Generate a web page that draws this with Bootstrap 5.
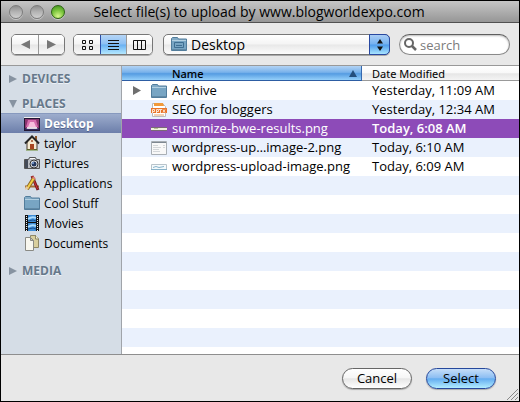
<!DOCTYPE html>
<html lang="en">
<head>
<meta charset="utf-8">
<meta name="viewport" content="width=device-width, initial-scale=1">
<title>Select file(s) to upload</title>
<link rel="stylesheet" href="https://cdn.jsdelivr.net/npm/bootstrap@5.3.0/dist/css/bootstrap.min.css">
<style>
body { font-family: "Open Sans", "Noto Sans", sans-serif; font-size: 13px; line-height: 19px; color: #000; }
.dialog { background: #e8e8e8; border: 1px solid #000; }
.titlebar { height: 22px; background: linear-gradient(#c6c6c6, #969696); border-bottom: 1px solid #515151; padding: 0 66px 0 8px; }
.titlebar h1 { font-size: 14px; line-height: 20px; white-space: nowrap; }
.lights { gap: 7px; }
.light { width: 14px; height: 14px; border-radius: 50%; border: 1px solid #7c7c7c; background: linear-gradient(#8e8e8e, #b4b4b4 50%, #d0d0d0); box-shadow: 0 1px 0 #c8c8c8; }
.light.go { border-color: #2e6414; background: radial-gradient(circle at 50% 85%, #d8f78c, #7cc63e 50%, #3d8d1c); }
.toolbar { height: 42px; padding: 11px 10px 0; }
.seg { border: 1px solid #777; border-radius: 5px; height: 21px; overflow: hidden; box-shadow: 0 1px 0 #aaa; }
.seg .btn { width: 26px; border: 0; border-radius: 0; background: linear-gradient(#fff, #f4f4f4 48%, #e6e6e6 52%, #f8f8f8); }
.seg .btn + .btn { border-left: 1px solid #999; }
.seg .btn.on { background: linear-gradient(#b5d5f6, #8cc0f4 48%, #68b0f2 52%, #b4e8ff); border-color: #2d4fa8; }
.seg svg { display: block; }
.place { margin-left: 10px; margin-right: 9px; height: 21px; }
.place select { appearance: none; height: 21px; border: 1px solid #777; border-radius: 5px; padding: 0 24px 0 27px; font-size: 14px; line-height: 19px; color: #000; background: linear-gradient(#fff, #f4f4f4 48%, #e8e8e8 52%, #fcfcfc); box-shadow: 0 1px 0 #aaa; }
.place .folder { left: 8px; top: 3px; pointer-events: none; }
.place .stepper { right: 0; top: 0; width: 21px; height: 21px; border: 1px solid #2848a0; border-radius: 0 5px 5px 0; background: linear-gradient(#aacdf4, #74b1f0 48%, #4e9bea 52%, #a8e4ff); pointer-events: none; }
.find { width: 111px; height: 21px; margin-right: -1px; }
.find input { height: 21px; border: 1px solid #8a8a8a; border-top-color: #5f5f5f; border-radius: 11px; padding: 0 8px 0 20px; font-size: 13px; line-height: 19px; box-shadow: inset 0 1px 2px #bbb; }
.find input::placeholder { color: #7b7b7b; opacity: 1; }
.find svg { left: 5px; top: 4px; pointer-events: none; }
.browser { border-top: 1px solid #999; border-bottom: 1px solid #8e8e8e; }
.sidebar { width: 121px; background: #d5dde6; border-right: 1px solid #a0a4aa; font-size: 12px; padding-top: 3px; }
.group-toggle { border: 0; background: none; padding: 0 0 0 8px; height: 19px; gap: 5px; color: #66788a; font-weight: 700; font-size: 12px; text-shadow: 0 1px 0 #edf2f7; }
.group-toggle svg { fill: #8793a1; }
.places-group { margin-top: 6px; margin-bottom: 8px; }
.side-item { height: 20px; padding-left: 23px; gap: 4px; color: #000; text-decoration: none; }
.side-item svg { flex: none; }
.side-item.current { color: #fff; font-weight: 700; background: linear-gradient(#9dadcd, #6c7eaa); border-top: 1px solid #8799be; text-shadow: 0 1px 0 #51638d; }
.files { min-width: 0; background: repeating-linear-gradient(#fff 0 19px, #eaf1fd 19px 38px) 0 15px; background-repeat: no-repeat; }
.filelist { table-layout: fixed; border-collapse: separate; border-spacing: 0; }
.filelist th { height: 15px; padding: 0; font-family: "Noto Sans", sans-serif; font-size: 11px; line-height: 13px; font-weight: 400; border-bottom: 1px solid #999; background: linear-gradient(#fff, #f8f8f8 50%, #e6e6e6 55%, #f4f4f4); }
.filelist th.sorted { font-weight: 500; border-bottom-color: #2d5da3; border-right: 1px solid #3668ae; background: linear-gradient(#b2d3f4, #79b2eb 45%, #559ce2 55%, #95d0fa); }
.sort-label { padding-left: 50px; }
.filelist td { height: 19px; padding: 0; white-space: nowrap; }
.filelist .when { padding-left: 10px; }
.filelist .chosen td { background: #8d4bb8; color: #fff; }
.filelist .chosen .when { font-weight: 600; }
.name-cell { height: 19px; padding-left: 11px; gap: 5px; }
.name-cell svg { flex: none; }
.name-cell .turn { width: 13px; }
.actions { height: 46px; padding: 0 23px 0 0; gap: 14px; }
.pill { width: 70px; height: 21px; padding: 0; border: 1px solid #666; border-radius: 11px; font-size: 13px; line-height: 18px; color: #000; background: linear-gradient(#fff, #f6f6f6 45%, #e6e6e6 52%, #fff); box-shadow: 0 1px 1px #aaa; }
.pill.main { border-color: #26489c; background: linear-gradient(#c6def8, #8ebff3 45%, #65adf0 52%, #b2edff); }
.grip { right: 1px; bottom: 1px; }
</style>
</head>
<body>
<svg class="d-none" aria-hidden="true">
  <symbol id="folder" viewBox="0 0 16 14"><path d="M.5 13.5v-12l1-1h5l1 1.500h8v11.500z" fill="#82aac5" stroke="#527d9c"/><path d="M1 4h14v9H1z" fill="#78a5c3"/><path d="M1 3.500h14" stroke="#b3d0e1"/><path d="M1 12.500h14" stroke="#6189a5"/></symbol>
  <symbol id="right" viewBox="0 0 8 8"><path d="M0 0l8 4-8 4z"/></symbol>
  <symbol id="down" viewBox="0 0 8 8"><path d="M0 0h8L4 8z"/></symbol>
</svg>
<div class="dialog d-flex flex-column min-vh-100 position-relative">
  <header class="titlebar d-flex align-items-center">
    <div class="lights d-flex"><span class="light"></span><span class="light"></span><span class="light go"></span></div>
    <h1 class="flex-grow-1 text-center fw-normal m-0">Select file(s) to upload by www.blogworldexpo.com</h1>
  </header>
  <div class="toolbar d-flex">
    <div class="seg d-flex" role="group" aria-label="History">
      <button class="btn p-0 d-flex align-items-center justify-content-center" aria-label="Back"><svg width="9" height="9"><path d="M9 0v9L0 4.500z" fill="#777"/></svg></button>
      <button class="btn p-0 d-flex align-items-center justify-content-center" aria-label="Forward"><svg width="9" height="9"><path d="M0 0v9l9-4.500z" fill="#777"/></svg></button>
    </div>
    <div class="seg d-flex ms-2" role="group" aria-label="View">
      <button class="btn p-0 d-flex align-items-center justify-content-center" aria-label="Icons"><svg width="11" height="10" fill="none" stroke="#111"><path d="M.5.5h3v3h-3zM7.500.5h3v3h-3zM.5 6.500h3v3h-3zM7.500 6.500h3v3h-3z"/></svg></button>
      <button class="btn on p-0 d-flex align-items-center justify-content-center" aria-label="List"><svg width="11" height="10" stroke="#111"><path d="M0 .5h11M0 3.500h11M0 6.500h11M0 9.500h11"/></svg></button>
      <button class="btn p-0 d-flex align-items-center justify-content-center" aria-label="Columns"><svg width="13" height="10" fill="none" stroke="#111"><path d="M.5.5h12v9H.5zM4.500 0v10M8.500 0v10"/></svg></button>
    </div>
    <div class="place position-relative flex-grow-1">
      <select class="w-100 d-block" aria-label="Location"><option>Desktop</option></select>
      <svg class="folder position-absolute" width="16" height="14"><use href="#folder"/><path d="M3.500 5.500h9v5h-9zM5 8.500h6" fill="none" stroke="#3f6e91"/></svg>
      <span class="stepper position-absolute d-flex align-items-center justify-content-center"><svg width="6" height="12"><path d="M0 4.500h6L3 0zM0 7.500h6L3 12z" fill="#111"/></svg></span>
    </div>
    <div class="find position-relative">
      <input class="w-100 d-block" type="search" placeholder="search" aria-label="Search files">
      <svg class="position-absolute" width="13" height="13" fill="none" stroke="#666" stroke-width="2"><circle cx="5" cy="5" r="4"/><path d="M8 8l4 4" stroke-width="2.500"/></svg>
    </div>
  </div>
  <main class="browser d-flex flex-grow-1">
    <nav class="sidebar flex-shrink-0" aria-label="Places">
      <button class="group-toggle d-flex align-items-center"><svg width="8" height="8"><use href="#right"/></svg>DEVICES</button>
      <div class="places-group">
        <button class="group-toggle d-flex align-items-center"><svg width="8" height="8"><use href="#down"/></svg>PLACES</button>
        <a href="#" class="side-item current d-flex align-items-center"><svg width="16" height="14"><path fill="#211833" d="M0 0h16v14H0z"/><path fill="#8b356f" d="M1 2h14v9H1z"/><path fill="#d66cae" d="M4 3h8l2 7H2z"/><path fill="#f7bddd" d="M6 5h4l2 5H4z"/><path fill="#35265c" d="M1 11h14v2H1z"/><path d="M3 12l1-2 1 2 1-2 1 2 1-2 1 2 1-2 1 2 1-2 1 2" stroke="#fff" fill="none"/><path fill="#eee" d="M0 0h16v1H0z"/></svg>Desktop</a>
        <a href="#" class="side-item d-flex align-items-center"><svg width="16" height="16"><path fill="#8b5428" d="M11 1h2v5h-2z"/><path d="M3 7l5-5 5 5v7.500H3z" fill="#f5ead1" stroke="#49362a"/><path d="M1 8.500L8 1.500l7 7" fill="none" stroke="#252525" stroke-width="2"/><path d="M6 9h4v6H6z" fill="#a84620"/><circle cx="8" cy="6" r="1" fill="#a14d26"/><path d="M2 15h12" stroke="#6a8b31"/></svg>taylor</a>
        <a href="#" class="side-item d-flex align-items-center"><svg width="16" height="16"><path d="M.5 4.500h4l1-2h6l1 2h3v9H.5z" fill="#b9bcc2" stroke="#555"/><path d="M1 5h3v8H1z" fill="#444b58"/><path d="M6 3h5v1H6z" fill="#f8f8f8"/><circle cx="10" cy="9" r="4" fill="#ededed" stroke="#333"/><circle cx="10" cy="9" r="2.500" fill="#273a5e"/><circle cx="9" cy="8" r="1" fill="#85a8de"/></svg>Pictures</a>
        <a href="#" class="side-item d-flex align-items-center"><svg width="16" height="16" fill="none"><path d="M1 11.500h14" stroke="#a66b35" stroke-width="2"/><path d="M8 1l6 14" stroke="#751a20" stroke-width="3"/><path d="M8 1l5.500 13" stroke="#d43437"/><path d="M10 3L3 14" stroke="#8c6723" stroke-width="4"/><path d="M10 3L3 14" stroke="#f4d044" stroke-width="2"/><path d="M1 15l1-4 3 2z" fill="#e7c9a2"/><path d="M9 2l2 2" stroke="#db7c79" stroke-width="2"/></svg>Applications</a>
        <a href="#" class="side-item d-flex align-items-center"><svg width="16" height="14"><use href="#folder"/></svg>Cool Stuff</a>
        <a href="#" class="side-item d-flex align-items-center"><svg width="16" height="16"><path fill="#111" d="M1 0h14v16H1z"/><path fill="#3d8bd4" d="M4 0h8v7H4zM4 8h8v8H4z"/><path d="M4 4q4-3 8-1M4 12q4-3 8-1" stroke="#a9dcff" stroke-width="2" fill="none"/><path d="M4 6l5-1 3 1M4 14l5-1 3 1" stroke="#194f8f" fill="none"/><path d="M2.500 1v15M13.500 1v15" stroke="#eee" stroke-dasharray="1 1"/></svg>Movies</a>
        <a href="#" class="side-item d-flex align-items-center"><svg width="16" height="16"><path d="M6.500.5h5l3 3v9h-8z" fill="#d9cf9e" stroke="#8e8766"/><path d="M11.500 0v4h3" fill="#f7f2d8" stroke="#8e8766"/><path d="M1.500 2.500h5l3 3v10h-8z" fill="#f8f7ef" stroke="#8a8a84"/><path d="M6.500 2.500v3h3z" fill="#ccc9bc" stroke="#8a8a84"/></svg>Documents</a>
      </div>
      <button class="group-toggle d-flex align-items-center"><svg width="8" height="8"><use href="#right"/></svg>MEDIA</button>
    </nav>
    <section class="files flex-grow-1">
      <table class="filelist w-100">
        <colgroup><col><col width="157"></colgroup>
        <thead><tr>
          <th class="sorted" aria-sort="ascending"><div class="sort-label d-flex align-items-center pe-1"><span class="flex-grow-1">Name</span><svg width="8" height="7"><path d="M4 0l4 7H0z" fill="#254f7d"/></svg></div></th>
          <th class="when">Date Modified</th>
        </tr></thead>
        <tbody>
          <tr><td><div class="name-cell d-flex align-items-center"><span class="turn d-flex"><svg width="8" height="9" fill="#6f6f6f"><path d="M0 0l8 4.500L0 9z"/></svg></span><svg width="16" height="14"><use href="#folder"/></svg><span>Archive</span></div></td><td class="when">Yesterday, 11:09 AM</td></tr>
          <tr><td><div class="name-cell d-flex align-items-center"><span class="turn"></span><svg width="16" height="14"><path d="M1.500.5h10l3 3v10h-13z" fill="#fff" stroke="#bbb"/><path d="M3 0h9l1 3H3z" fill="#f19a3b"/><path fill="#e9762b" d="M0 5h16v5H0z"/><path d="M1.500 10V6.500h2v2h-2M5.500 10V6.500h2v2h-2M8 6.500h3M9.500 6.500V10M12 6.500l2 3M14 6.500l-2 3" fill="none" stroke="#fbe3cf"/><path d="M3 12h10" stroke="#e5a66f"/></svg><span>SEO for bloggers</span></div></td><td class="when">Yesterday, 12:34 AM</td></tr>
          <tr class="chosen"><td><div class="name-cell d-flex align-items-center"><span class="turn"></span><svg width="16" height="4"><path fill="#7a6a76" d="M0 0h16v4H0z"/><path fill="#efefdd" d="M0 1h16v2H0z"/><path fill="#b6bf93" d="M3 1h4v1H3z"/></svg><span>summize-bwe-results.png</span></div></td><td class="when">Today, 6:08 AM</td></tr>
          <tr><td><div class="name-cell d-flex align-items-center"><span class="turn"></span><svg width="16" height="14"><path d="M.5.5h15v13H.5z" fill="#f8f8f8" stroke="#a9afb5"/><path d="M1 1.500h14" stroke="#7d8791"/><path d="M2 4.500h5M2 6.500h8M2 8.500h6M2 10.500h7M12 4.500h2M12 6.500h2" stroke="#d3d6d9"/></svg><span>wordpress-up…image-2.png</span></div></td><td class="when">Today, 6:10 AM</td></tr>
          <tr><td><div class="name-cell d-flex align-items-center"><span class="turn"></span><svg width="16" height="6"><path d="M.5.5h15v5H.5z" fill="#f5fafc" stroke="#b9c4cb"/><path d="M2 3.500l3-1 3 1 5-1M0 5.500h16" stroke="#89b3ca" fill="none"/></svg><span>wordpress-upload-image.png</span></div></td><td class="when">Today, 6:09 AM</td></tr>
        </tbody>
      </table>
    </section>
  </main>
  <footer class="actions d-flex align-items-center justify-content-end">
    <button class="btn pill">Cancel</button>
    <button class="btn pill main">Select</button>
  </footer>
  <svg class="grip position-absolute" width="12" height="12" stroke="#888"><path d="M1 12L12 1M5 12l7-7M9 12l3-3"/></svg>
</div>
<script src="https://cdn.jsdelivr.net/npm/bootstrap@5.3.0/dist/js/bootstrap.bundle.min.js"></script>
</body>
</html>
